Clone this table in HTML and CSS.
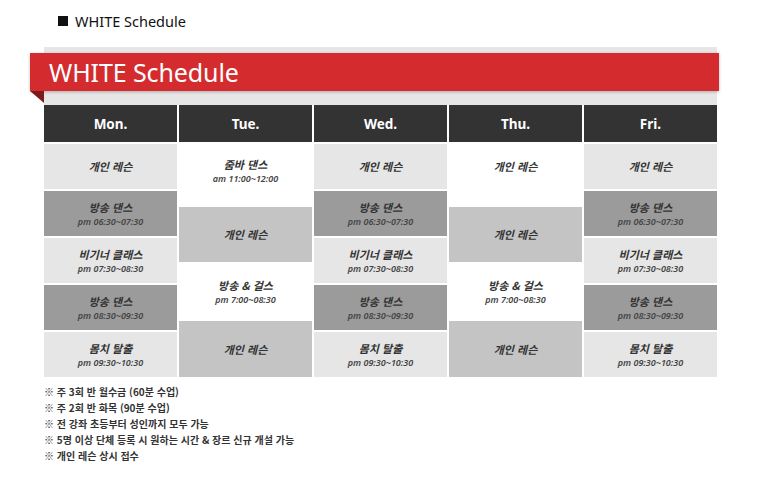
FILE: index.html
```html
<!DOCTYPE html>
<html lang="ko">
<head>
<meta charset="utf-8">
<title>WHITE Schedule</title>
<link rel="stylesheet" href="styles.css">
</head>
<body>
<div class="page">
  <h2 class="heading"><span class="sq"></span>WHITE Schedule</h2>
  <div class="board">
    <div class="banner"><span class="banner-text">WHITE Schedule</span></div>
    <div class="grid">
      <div class="col">
        <div class="day">Mon.</div>
        <div class="cells gapped">
          <div class="cell light"><b>개인 레슨</b></div>
          <div class="cell dark"><b>방송 댄스</b><i>pm 06:30~07:30</i></div>
          <div class="cell light"><b>비기너 클래스</b><i>pm 07:30~08:30</i></div>
          <div class="cell dark"><b>방송 댄스</b><i>pm 08:30~09:30</i></div>
          <div class="cell light"><b>몸치 탈출</b><i>pm 09:30~10:30</i></div>
        </div>
      </div>
      <div class="col">
        <div class="day">Tue.</div>
        <div class="cells">
          <div class="cell white h1"><b>줌바 댄스</b><i>am 11:00~12:00</i></div>
          <div class="cell mid h2"><b>개인 레슨</b></div>
          <div class="cell white h3"><b>방송 &amp; 걸스</b><i>pm 7:00~08:30</i></div>
          <div class="cell mid h4"><b>개인 레슨</b></div>
        </div>
      </div>
      <div class="col">
        <div class="day">Wed.</div>
        <div class="cells gapped">
          <div class="cell light"><b>개인 레슨</b></div>
          <div class="cell dark"><b>방송 댄스</b><i>pm 06:30~07:30</i></div>
          <div class="cell light"><b>비기너 클래스</b><i>pm 07:30~08:30</i></div>
          <div class="cell dark"><b>방송 댄스</b><i>pm 08:30~09:30</i></div>
          <div class="cell light"><b>몸치 탈출</b><i>pm 09:30~10:30</i></div>
        </div>
      </div>
      <div class="col">
        <div class="day">Thu.</div>
        <div class="cells">
          <div class="cell white h1 single"><b>개인 레슨</b></div>
          <div class="cell mid h2"><b>개인 레슨</b></div>
          <div class="cell white h3"><b>방송 &amp; 걸스</b><i>pm 7:00~08:30</i></div>
          <div class="cell mid h4"><b>개인 레슨</b></div>
        </div>
      </div>
      <div class="col">
        <div class="day">Fri.</div>
        <div class="cells gapped">
          <div class="cell light"><b>개인 레슨</b></div>
          <div class="cell dark"><b>방송 댄스</b><i>pm 06:30~07:30</i></div>
          <div class="cell light"><b>비기너 클래스</b><i>pm 07:30~08:30</i></div>
          <div class="cell dark"><b>방송 댄스</b><i>pm 08:30~09:30</i></div>
          <div class="cell light"><b>몸치 탈출</b><i>pm 09:30~10:30</i></div>
        </div>
      </div>
    </div>
  </div>
  <ul class="notes">
    <li>※ 주 3회 반 월수금 (60분 수업)</li>
    <li>※ 주 2회 반 화목 (90분 수업)</li>
    <li>※ 전 강좌 초등부터 성인까지 모두 가능</li>
    <li>※ 5명 이상 단체 등록 시 원하는 시간 &amp; 장르 신규 개설 가능</li>
    <li>※ 개인 레슨 상시 접수</li>
  </ul>
</div>
</body>
</html>
```

FILE: styles.css
```css
html, body {
  margin: 0;
  padding: 0;
  background: #fff;
}
body {
  font-family: "Noto Sans", "Noto Sans CJK KR", sans-serif;
  color: #222;
}
.page {
  padding: 11px 0 0 44px;
}
.heading {
  margin: 0 0 0 14px;
  font-size: 14.5px;
  font-weight: 400;
  line-height: 20px;
  color: #111;
  display: flex;
  align-items: center;
}
.sq {
  width: 10px;
  height: 10px;
  background: #111;
  margin-right: 7px;
}
.board {
  width: 673px;
  margin-top: 16px;
  background: linear-gradient(#e6e6e6, #e6e6e6) top / 100% 58px no-repeat;
  padding-top: 6px;
}
.banner {
  position: relative;
  height: 38px;
  margin-left: -14px;
  margin-right: -2px;
  background: #d42c2e;
  box-shadow: 0 1px 3px rgba(0,0,0,0.25);
  display: flex;
  align-items: center;
  padding-left: 19px;
}
.banner::after {
  content: "";
  position: absolute;
  left: 0;
  top: 38px;
  border-top: 12px solid #7d1a1a;
  border-left: 14px solid transparent;
}
.banner-text {
  color: #fff;
  font-size: 25px;
  font-weight: 400;
  letter-spacing: -0.1px;
  margin-top: -1px;
}
.grid {
  margin-top: 14px;
  display: grid;
  grid-template-columns: repeat(5, 133px);
  column-gap: 2px;
}
.col {
  display: flex;
  flex-direction: column;
}
.day {
  height: 37px;
  background: #333;
  color: #fff;
  font-weight: 700;
  font-size: 13.5px;
  display: flex;
  align-items: center;
  justify-content: center;
  margin-bottom: 2px;
}
.cells {
  display: flex;
  flex-direction: column;
}
.cells.gapped {
  gap: 2px;
}
.cell {
  height: 45px;
  display: flex;
  flex-direction: column;
  align-items: center;
  justify-content: center;
  font-family: "Noto Sans CJK KR", "Noto Sans", sans-serif;
  color: #333;
}
.cell b {
  font-size: 11px;
  font-style: italic;
  font-weight: 700;
  line-height: 15px;
}
.cell i {
  font-family: "Noto Sans", "Noto Sans CJK KR", sans-serif;
  font-size: 9px;
  font-weight: 600;
  line-height: 12px;
  color: #444;
  margin-top: 1px;
}
.light { background: #e6e6e6; }
.dark { background: #9b9b9b; }
.mid { background: #c4c4c4; }
.white { background: #fff; }
.h1 { height: 63px; padding-bottom: 9px; box-sizing: border-box; }
.h1.single { padding-bottom: 18px; }
.h2 { height: 55px; }
.h3 { height: 59px; }
.h4 { height: 56px; }
.notes {
  list-style: none;
  margin: 7px 0 0;
  padding: 0;
  font-family: "Noto Sans CJK KR", sans-serif;
  font-size: 10px;
  font-weight: 700;
  color: #333;
}
.notes li {
  line-height: 16px;
}
```
